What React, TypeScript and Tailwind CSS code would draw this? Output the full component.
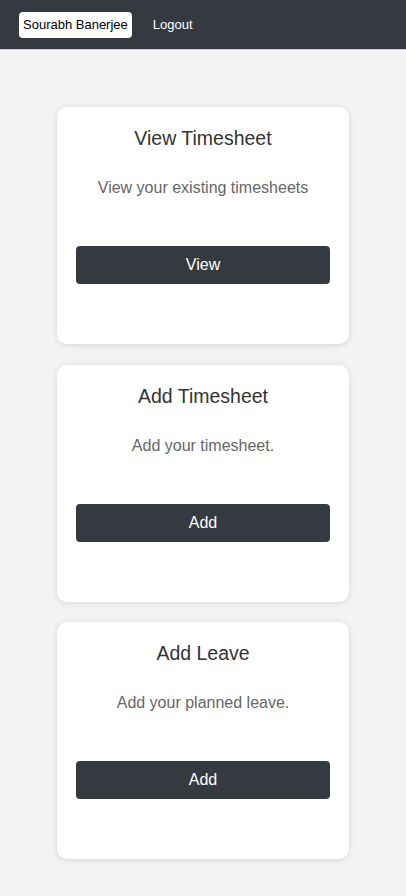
import React from "react";

const cards = [
  { title: "View Timesheet", desc: "View your existing timesheets", btn: "View" },
  { title: "Add Timesheet", desc: "Add your timesheet.", btn: "Add" },
  { title: "Add Leave", desc: "Add your planned leave.", btn: "Add" },
];

export default function App() {
  return (
    <div className="min-h-[896px] bg-[#f3f3f3] font-['Liberation_Sans',Arial,sans-serif]">
      <header className="h-[50px] bg-[#353a41] border-b border-[#d0d0d0] flex items-center pl-[19px] pt-[1px]">
        <div className="h-[26px] px-[4px] bg-white rounded-[4px] flex items-center text-[13px] text-black">
          Sourabh Banerjee
        </div>
        <div className="ml-[21px] text-[13px] text-white">Logout</div>
      </header>
      <main className="flex flex-col items-center pt-[57px] gap-[20.5px] pb-[37px]">
        {cards.map((c) => (
          <div
            key={c.title}
            className="w-[292px] h-[237px] bg-white rounded-[10px] shadow-[0_1px_6px_rgba(0,0,0,0.12)] px-[19px] pt-[19px] flex flex-col items-center"
          >
            <div className="text-[19.5px] leading-[24px] text-[#333]">{c.title}</div>
            <div className="mt-[28px] text-[16px] leading-[19px] text-[#666]">{c.desc}</div>
            <button className="mt-[49px] w-full h-[38px] bg-[#353a41] rounded-[4px] text-white text-[16px]">
              {c.btn}
            </button>
          </div>
        ))}
      </main>
    </div>
  );
}
